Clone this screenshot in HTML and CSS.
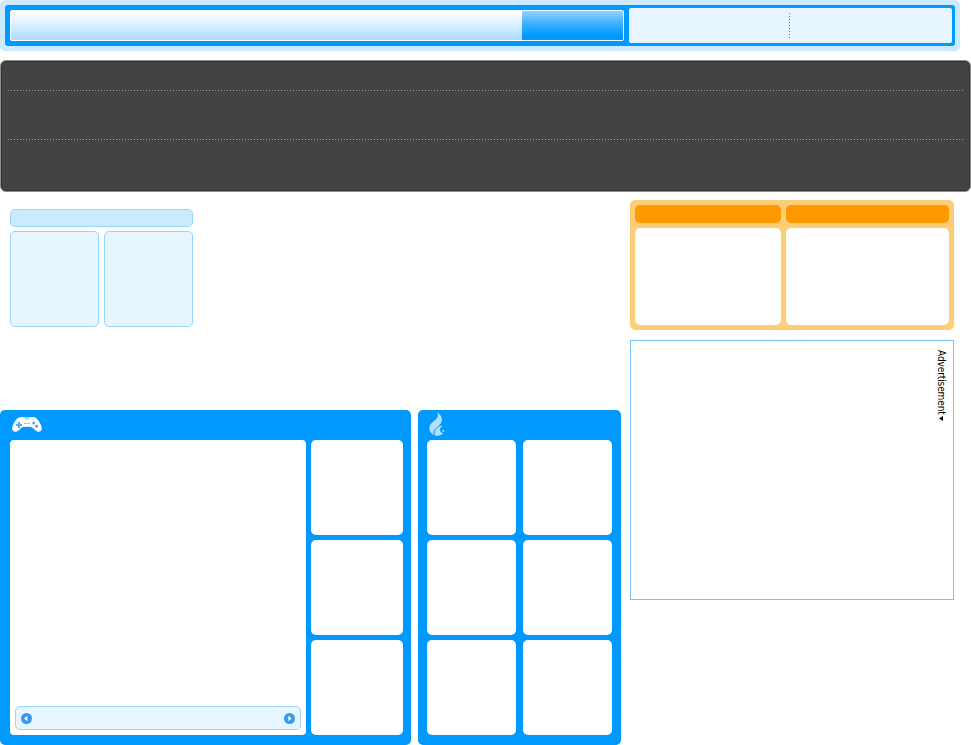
FILE: index.html
```html
<!DOCTYPE html>
<html lang="en">
<head>
<meta charset="utf-8">
<title>Games portal</title>
<link rel="stylesheet" href="styles.css">
</head>
<body>
<header class="header">
  <div class="header-bar">
    <div class="search"><div class="search-field"></div><div class="search-button"></div></div>
    <div class="account"><svg class="divider" width="1" height="26" shape-rendering="crispEdges"><path d="M.5 0V26" stroke="#0099ff" stroke-dasharray="1 2"/></svg></div>
  </div>
</header>
<nav class="menu">
  <svg class="rule rule-first" width="955" height="1" shape-rendering="crispEdges"><path d="M0 .5H955" stroke="#a0a09f" stroke-dasharray="1 2"/></svg>
  <svg class="rule" width="955" height="1" shape-rendering="crispEdges"><path d="M0 .5H955" stroke="#a0a09f" stroke-dasharray="1 2"/></svg>
</nav>
<main class="content">
  <div class="main-column">
    <section class="intro">
      <div class="intro-title"></div>
      <div class="intro-box"></div>
      <div class="intro-box"></div>
    </section>
    <div class="panels">
      <section class="panel games">
        <div class="panel-head">
          <svg class="pad-icon" width="30" height="16" viewBox="0 0 30 16">
            <path d="M6 .8C8 0 10 0 12 .3H18C20 0 22 0 24 .8C27 3.500 30 9 29.800 12C29.500 15.500 25.500 15.200 23.500 13.500C21.500 11.800 20.500 10 18 10H12C9.500 10 8.500 11.800 6.500 13.500C4.500 15.200 .5 15.500 .2 12C0 9 3 3.500 6 .8Z" fill="#fff"/>
            <path d="M.8 12.500C2 15 5 14 7.500 11.800M29.200 12.500C28 15 25 14 22.500 11.800M11.500 9.500H18.500" fill="none" stroke="#d5e6f3"/>
            <path d="M13 0H17V2.500H13Z" fill="#99d6ff"/>
            <path d="M4 8H10M7 5V11" stroke="#53adef" stroke-width="2.200"/>
            <circle cx="21.700" cy="6" r="1.500" fill="#53adef"/><circle cx="24.600" cy="9.200" r="1.600" fill="#53adef"/>
            <path d="M12 6.500H14.500M15.500 6.500H18" stroke="#f3ab49"/>
          </svg>
        </div>
        <div class="games-body">
          <div class="feature">
            <div class="pager">
              <svg width="11" height="11" viewBox="0 0 11 11"><circle cx="5.500" cy="5.500" r="5.500" fill="#3399f8"/><path d="M6.300 2.800V8.200L3 5.500Z" fill="#fff"/></svg>
              <svg width="11" height="11" viewBox="0 0 11 11"><circle cx="5.500" cy="5.500" r="5.500" fill="#3399f8"/><path d="M4.300 2.800V8.200L7.600 5.500Z" fill="#fff"/></svg>
            </div>
          </div>
          <div class="games-side"><div class="card"></div><div class="card"></div><div class="card"></div></div>
        </div>
      </section>
      <section class="panel hot">
        <div class="panel-head">
          <svg class="flame-icon" width="16" height="24" viewBox="0 0 16 24">
            <path d="M8.300 .3C12 3 14.500 7 11.800 11.200C9.500 14.500 5.500 16.300 4.500 19.700C4.100 21.300 4.500 22.800 5.800 23.500C1.500 22.200-.4 18 .5 14.500C1.500 10.500 6.500 8.800 8.200 5.700C9.200 3.800 8.900 2 8.300 .3Z" fill="#b3e0ff"/>
            <path d="M6 23.400C4.500 19.800 5.500 17.500 8.200 15.500C10.200 14.100 12 13.500 13.800 13.800C12.300 15 10.800 16.300 11 18.200C11.200 20 13 21.200 14.300 21.300C12.500 23.600 9 24.100 6 23.400Z" fill="#b3e0ff"/>
            <path d="M5.400 22C5.400 18.800 6.500 16.800 9 15.200" fill="none" stroke="#38adff" stroke-width=".8"/>
            <path d="M13.200 17.500L15.800 18.900L13.800 20.300Z" fill="#b3e0ff"/>
          </svg>
        </div>
        <div class="hot-grid"><div class="card"></div><div class="card"></div><div class="card"></div><div class="card"></div><div class="card"></div><div class="card"></div></div>
      </section>
    </div>
  </div>
  <aside class="sidebar">
    <section class="offers">
      <div class="offer-title"></div><div class="offer-title"></div>
      <div class="card"></div><div class="card"></div>
    </section>
    <section class="ad">
      <div class="ad-label"><span>Advertisement</span><svg width="4" height="5" viewBox="0 0 4 5"><path d="M0 2.500L4 0V5Z"/></svg></div>
    </section>
  </aside>
</main>
</body>
</html>
```
FILE: styles.css
```css
* { box-sizing: border-box; }
html, body { height: 100%; }
body { margin: 0; background: #fff; overflow: hidden; }
svg { display: block; flex: none; }

.header { width: 960px; height: 51px; padding: 5px; background: #cceaff; border-radius: 5px; }
.header-bar { display: flex; gap: 5px; height: 41px; padding: 3px 3px 3px 5px; background: #0099ff; border-radius: 3px; }
.search { display: flex; width: 614px; height: 31px; margin-top: 2px; border: 1px solid #fff; border-radius: 2px; background: #fff; }
.search-field { flex: 1; background: linear-gradient(#fff, #f4faff 18%, #b3dfff 90%, #b3dfff); }
.search-button { width: 101px; background: linear-gradient(#91d2ff, #31acff 50%, #0099ff 85%); }
.account { flex: 1; height: 35px; padding: 5px 0 0 160px; background: #e6f5ff; border-radius: 2px; }

.menu { width: 971px; height: 132px; margin-top: 9px; padding: 28px 6px 0; border: 1px solid #8e8e8d; border-radius: 6px; background: #444341; box-shadow: inset 0 0 0 1px #333; }
.rule { margin: 0 auto 0 1px; }
.rule-first { margin-top: 1px; margin-bottom: 48px; }

.content { display: flex; gap: 9px; height: 553px; padding-top: 8px; }
.main-column { display: flex; flex-direction: column; justify-content: space-between; width: 621px; }
.intro { display: grid; grid-template: 18px 96px / 89px 89px; gap: 4px 5px; margin: 9px 0 0 10px; }
.intro-title { grid-column: 1 / 3; }
.intro-title, .intro-box { border: 1px solid #99d6ff; border-radius: 5px; background: #e6f5ff; }
.intro-title { background: #cceaff; }

.panels { display: flex; gap: 7px; }
.panel { height: 335px; background: #0099ff; border-radius: 5px; }
.panel-head { height: 30px; }
.games { width: 411px; padding: 0 8px 10px 10px; }
.games .panel-head { padding: 7px 0 0 2px; }
.games-body { display: flex; gap: 5px; height: 295px; }
.feature { display: flex; align-items: flex-end; width: 296px; padding: 5px; background: #fff; border-radius: 4px; }
.pager { display: flex; flex: 1; align-items: center; justify-content: space-between; height: 24px; padding: 0 5px; border: 1px solid #99d6ff; border-radius: 5px; background: #e6f5ff; }
.games-side { display: grid; flex: 1; grid-template-rows: repeat(3, 95px); gap: 5px; }
.card { background: #fff; border-radius: 5px; }
.hot { width: 203px; padding: 0 9px 10px; }
.hot .panel-head { padding: 2px 0 0 2px; }
.hot-grid { display: grid; grid-template: repeat(3, 95px) / 89px 89px; gap: 5px 7px; }

.sidebar { width: 324px; }
.offers { display: grid; grid-template: 18px 97px / 146px 163px; gap: 5px; height: 130px; padding: 5px; border-radius: 5px; background: #ffcc77; }
.offer-title { background: #ff9900; border-radius: 5px; }
.ad { display: flex; justify-content: flex-end; height: 260px; margin-top: 10px; padding: 9px 5px 0; border: 1px solid #77c3ff; }
.ad-label { display: flex; flex-direction: column; align-items: center; gap: 1px; width: 14px; color: #000; }
.ad-label span { height: 65px; writing-mode: vertical-rl; font: 10px/14px "DejaVu Sans Condensed", "DejaVu Sans", sans-serif; letter-spacing: -.1px; white-space: nowrap; }
```
